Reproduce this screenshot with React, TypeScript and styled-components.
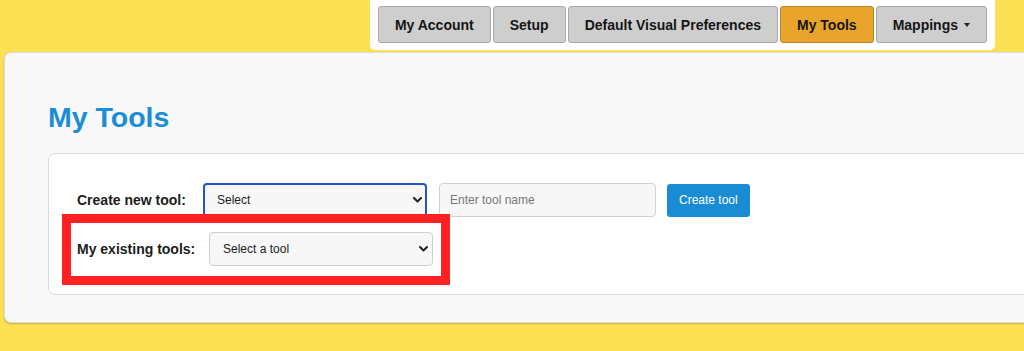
import React from "react"
import styled, { createGlobalStyle } from "styled-components"

const GlobalStyle = createGlobalStyle`
    html, body {
        margin: 0;
        padding: 0;
        background: #fde154;
        overflow: hidden;
    }
    body {
        font-family: "Liberation Sans", Helvetica, Arial, sans-serif;
        color: #1c1c1c;
    }
`

const Page = styled.div`
    display: flex;
    flex-direction: column;
    gap: 2px;
    padding-left: 4px;
    min-height: 351px;
`

const NavRow = styled.div`
    display: flex;
    justify-content: flex-end;
    padding-right: 29px;
`

const Nav = styled.nav`
    display: flex;
    gap: 2px;
    background: #ffffff;
    padding: 6px 8px 7px;
    border-radius: 0 0 5px 5px;
`

const NavButton = styled.button<{ $active?: boolean }>`
    display: flex;
    align-items: center;
    gap: 6px;
    height: 37px;
    padding: 0 16px;
    font-family: inherit;
    font-size: 14px;
    font-weight: bold;
    color: #151515;
    background: ${(p) => (p.$active ? "#e9a52b" : "#cecece")};
    border: 1.5px solid ${(p) => (p.$active ? "#b98427" : "#a8a8a8")};
    border-radius: 3px;
    cursor: pointer;
`

const Caret = styled.span`
    width: 0;
    height: 0;
    border-top: 4px solid #222;
    border-left: 3.5px solid transparent;
    border-right: 3.5px solid transparent;
`

const Panel = styled.main`
    margin-right: -20px;
    background: #f8f8f8;
    border: 1px solid #dcdcdc;
    border-radius: 7px;
    box-shadow: 0 1px 2px rgba(0, 0, 0, 0.22);
    padding: 48px 0 27px 43px;
`

const Title = styled.h1`
    margin: 0 0 20px;
    font-size: 28.5px;
    line-height: 32px;
    font-weight: bold;
    color: #1b8dd6;
`

const Card = styled.section`
    position: relative;
    display: flex;
    flex-direction: column;
    gap: 15px;
    background: #ffffff;
    border: 1px solid #dadada;
    border-radius: 7px;
    padding: 29px 0 28px 28px;
`

const FormRow = styled.div`
    display: flex;
    align-items: center;
    gap: 12px;
`

const Label = styled.label<{ $width: number }>`
    width: ${(p) => p.$width}px;
    font-size: 14px;
    font-weight: bold;
    color: #1c1c1c;
`

const SelectWrap = styled.div`
    position: relative;
    display: flex;
`

const Select = styled.select<{ $focused?: boolean }>`
    appearance: none;
    width: 224px;
    height: 34px;
    padding: 0 24px 0 ${(p) => (p.$focused ? 12 : 13)}px;
    font-family: inherit;
    font-size: 12px;
    color: #202020;
    background: #f7f7f7;
    border: ${(p) => (p.$focused ? "2px solid #2456c8" : "1px solid #cfcfcf")};
    border-radius: 4px;
    outline: none;
`

const Chevron = styled.svg`
    position: absolute;
    right: 5px;
    top: 50%;
    margin-top: -3px;
    pointer-events: none;
`

const TextInput = styled.input`
    width: 217px;
    height: 34px;
    box-sizing: border-box;
    padding: 0 10px;
    font-family: inherit;
    font-size: 12px;
    color: #202020;
    background: #f7f7f7;
    border: 1px solid #d2d2d2;
    border-radius: 4px;
    outline: none;

    &::placeholder {
        color: #777777;
    }
`

const PrimaryButton = styled.button`
    height: 33px;
    padding: 0 12px;
    margin-left: -1px;
    font-family: inherit;
    font-size: 12px;
    color: #ffffff;
    background: #1a8cd5;
    border: none;
    border-radius: 3px;
    cursor: pointer;
`

const Highlight = styled.div`
    position: absolute;
    left: 13px;
    top: 60px;
    width: 388px;
    height: 71px;
    box-sizing: border-box;
    border: 9px solid #fe2121;
    pointer-events: none;
`

const tabs = ["My Account", "Setup", "Default Visual Preferences", "My Tools"]

const ToolSelect: React.FC<{ value: string; focused?: boolean }> = ({ value, focused }) => (
    <SelectWrap>
        <Select $focused={focused} defaultValue={value}>
            <option>{value}</option>
        </Select>
        <Chevron width="9" height="6" viewBox="0 0 9 6">
            <polyline points="1,1 4.5,4.5 8,1" fill="none" stroke="#222" strokeWidth="2" strokeLinecap="round" strokeLinejoin="round" />
        </Chevron>
    </SelectWrap>
)

export default function App() {
    return (
        <>
            <GlobalStyle />
            <Page>
                <NavRow>
                    <Nav>
                        {tabs.map((tab) => (
                            <NavButton key={tab} $active={tab === "My Tools"}>{tab}</NavButton>
                        ))}
                        <NavButton>
                            Mappings
                            <Caret />
                        </NavButton>
                    </Nav>
                </NavRow>
                <Panel>
                    <Title>My Tools</Title>
                    <Card>
                        <FormRow>
                            <Label $width={114}>Create new tool:</Label>
                            <ToolSelect value="Select" focused />
                            <TextInput placeholder="Enter tool name" />
                            <PrimaryButton>Create tool</PrimaryButton>
                        </FormRow>
                        <FormRow>
                            <Label $width={120}>My existing tools:</Label>
                            <ToolSelect value="Select a tool" />
                        </FormRow>
                        <Highlight />
                    </Card>
                </Panel>
            </Page>
        </>
    )
}
